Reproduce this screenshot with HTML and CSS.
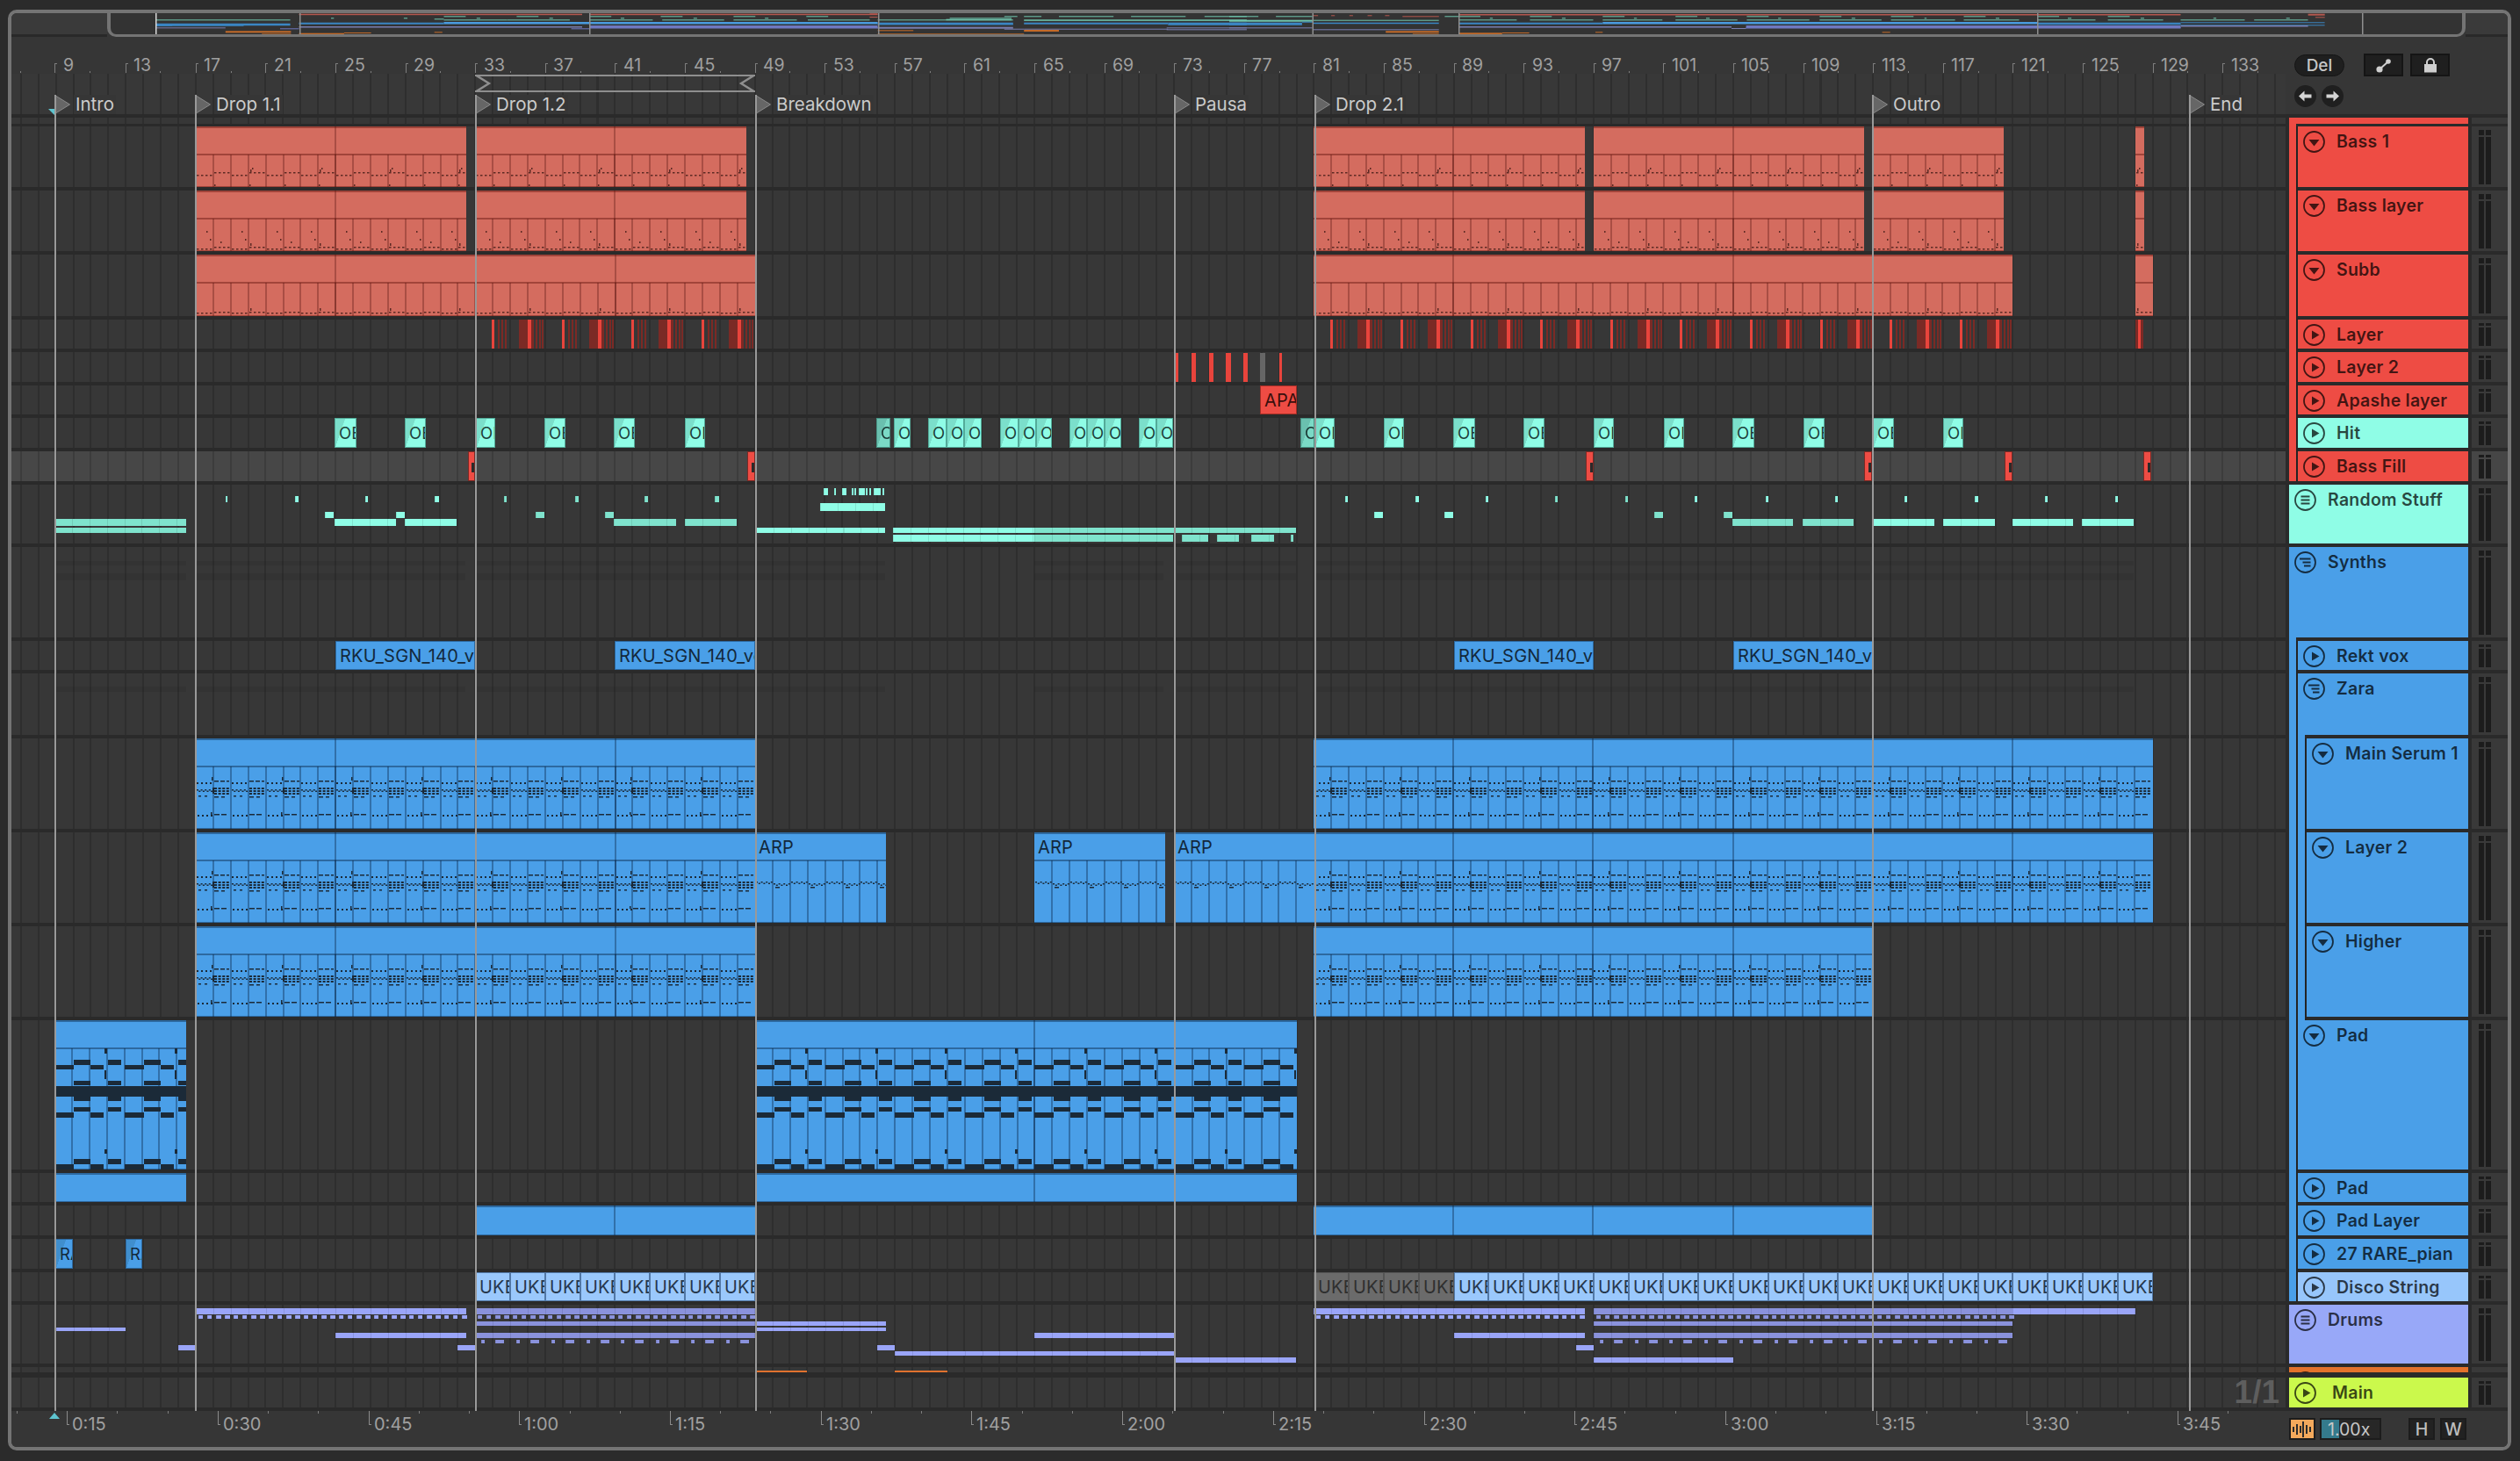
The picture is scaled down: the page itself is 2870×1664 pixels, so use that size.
FILE: index.html
```html
<!DOCTYPE html>
<html lang="en">
<head>
<meta charset="utf-8">
<title>Arrangement View</title>
<link rel="stylesheet" href="styles.css">
</head>
<body>
<svg class="defs" width="0" height="0" aria-hidden="true">
  <symbol id="i-play" viewBox="0 0 25 25"><circle cx="12.5" cy="12.5" r="11.5" fill="none" stroke="currentColor" stroke-width="1.8"/><path d="M10 7.5l8.5 5-8.5 5z" fill="currentColor"/></symbol>
  <symbol id="i-down" viewBox="0 0 25 25"><circle cx="12.5" cy="12.5" r="11.5" fill="none" stroke="currentColor" stroke-width="1.8"/><path d="M6.5 10h12l-6 7.5z" fill="currentColor"/></symbol>
  <symbol id="i-list" viewBox="0 0 25 25"><circle cx="12.5" cy="12.5" r="11.5" fill="none" stroke="currentColor" stroke-width="1.8"/><path d="M7.5 8.5h10M7.5 12.5h10M7.5 16.5h10" fill="none" stroke="currentColor" stroke-width="1.8"/></symbol>
  <symbol id="i-tree" viewBox="0 0 25 25"><circle cx="12.5" cy="12.5" r="11.5" fill="none" stroke="currentColor" stroke-width="1.8"/><path d="M6 8.5h12.5M9.5 12.5h9M11 16.5h7.5" fill="none" stroke="currentColor" stroke-width="1.8"/></symbol>
</svg>
<div class="frame">
  <div class="overview">
    <div class="ov-side ov-left"></div>
    <div class="ov-box" id="ov"></div>
    <div class="ov-side ov-right"></div>
  </div>

  <div class="top">
    <div class="ruler-area">
      <div class="ruler" id="ruler"></div>
      <div class="markers" id="markers">
        <div class="loop" id="loop">
          <svg class="loop-ends" preserveAspectRatio="none" viewBox="0 0 320 20"><path d="M0 0l16 10L0 20M320 0l-16 10 16 10" fill="none" stroke="#8f8f8f" stroke-width="2.4"/></svg>
        </div>
        <div class="playhead-top"></div>
      </div>
    </div>
    <div class="controls">
      <div class="ctl-row">
        <div class="pill">Del</div>
        <div class="sq-btn"><svg width="20" height="20" viewBox="0 0 20 20"><circle cx="5" cy="15" r="3.6" fill="#cfcfcf"/><circle cx="15" cy="6" r="2.8" fill="#cfcfcf"/><path d="M5 15L15 6" stroke="#cfcfcf" stroke-width="2"/></svg></div>
        <div class="sq-btn"><svg width="20" height="20" viewBox="0 0 20 20"><path d="M6 9V7a4 4 0 018 0v2" fill="none" stroke="#cfcfcf" stroke-width="2"/><rect x="3" y="9" width="14" height="9.5" fill="#cfcfcf"/></svg></div>
      </div>
      <div class="ctl-row second">
        <div class="arrow"><svg width="25" height="25" viewBox="0 0 25 25"><path d="M5 12.5l6.5-6v4h8v4h-8v4z" fill="#d4d4d4"/></svg></div>
        <div class="arrow"><svg width="25" height="25" viewBox="0 0 25 25"><path d="M20 12.5l-6.5-6v4h-8v4h8v4z" fill="#d4d4d4"/></svg></div>
      </div>
    </div>
  </div>

  <div class="tracks">
    <div class="row h10"><div class="lane"></div><div class="head g-red"><div class="name open"></div></div><div class="meter-col"><div class="meter"><i></i><i></i></div></div></div>

    <div class="row h73"><div class="lane" data-lane="bass1"></div><div class="head g-red"><div class="in"><div class="name"><svg class="ico"><use href="#i-down"/></svg><span>Bass 1</span></div></div></div><div class="meter-col"><div class="meter"><i></i><i></i></div></div></div>
    <div class="row h73"><div class="lane" data-lane="bass2"></div><div class="head g-red"><div class="in"><div class="name"><svg class="ico"><use href="#i-down"/></svg><span>Bass layer</span></div></div></div><div class="meter-col"><div class="meter"><i></i><i></i></div></div></div>
    <div class="row h74"><div class="lane" data-lane="subb"></div><div class="head g-red"><div class="in"><div class="name"><svg class="ico"><use href="#i-down"/></svg><span>Subb</span></div></div></div><div class="meter-col"><div class="meter"><i></i><i></i></div></div></div>
    <div class="row h37"><div class="lane" data-lane="layer"></div><div class="head g-red"><div class="in"><div class="name"><svg class="ico"><use href="#i-play"/></svg><span>Layer</span></div></div></div><div class="meter-col"><div class="meter"><i></i><i></i></div></div></div>
    <div class="row h38"><div class="lane" data-lane="layer2"></div><div class="head g-red"><div class="in"><div class="name"><svg class="ico"><use href="#i-play"/></svg><span>Layer 2</span></div></div></div><div class="meter-col"><div class="meter"><i></i><i></i></div></div></div>
    <div class="row h37"><div class="lane" data-lane="apashe"></div><div class="head g-red"><div class="in"><div class="name"><svg class="ico"><use href="#i-play"/></svg><span>Apashe layer</span></div></div></div><div class="meter-col"><div class="meter"><i></i><i></i></div></div></div>
    <div class="row h38"><div class="lane" data-lane="hit"></div><div class="head g-red"><div class="in"><div class="name n-cyan"><svg class="ico"><use href="#i-play"/></svg><span>Hit</span></div></div></div><div class="meter-col"><div class="meter"><i></i><i></i></div></div></div>
    <div class="row h38 lit"><div class="lane" data-lane="fill"></div><div class="head g-red end"><div class="in"><div class="name last"><svg class="ico"><use href="#i-play"/></svg><span>Bass Fill</span></div></div></div><div class="meter-col"><div class="meter"><i></i><i></i></div></div></div>

    <div class="row h71"><div class="lane" data-lane="random"></div><div class="head"><div class="name n-cyan l0"><svg class="ico"><use href="#i-list"/></svg><span>Random Stuff</span></div></div><div class="meter-col"><div class="meter"><i></i><i></i></div></div></div>
    <div class="row h107"><div class="lane" data-lane="synths"></div><div class="head g-blue"><div class="name open l0"><svg class="ico"><use href="#i-tree"/></svg><span>Synths</span></div></div><div class="meter-col"><div class="meter"><i></i><i></i></div></div></div>
    <div class="row h37"><div class="lane" data-lane="rekt"></div><div class="head g-blue"><div class="in"><div class="name"><svg class="ico"><use href="#i-play"/></svg><span>Rekt vox</span></div></div></div><div class="meter-col"><div class="meter"><i></i><i></i></div></div></div>
    <div class="row h74"><div class="lane" data-lane="zara"></div><div class="head g-blue"><div class="in"><div class="name open"><svg class="ico"><use href="#i-tree"/></svg><span>Zara</span></div></div></div><div class="meter-col"><div class="meter"><i></i><i></i></div></div></div>
    <div class="row h107"><div class="lane" data-lane="serum"></div><div class="head g-blue"><div class="in sub"><div class="in"><div class="name"><svg class="ico"><use href="#i-down"/></svg><span>Main Serum 1</span></div></div></div></div><div class="meter-col"><div class="meter"><i></i><i></i></div></div></div>
    <div class="row h107"><div class="lane" data-lane="arp"></div><div class="head g-blue"><div class="in sub"><div class="in"><div class="name"><svg class="ico"><use href="#i-down"/></svg><span>Layer 2</span></div></div></div></div><div class="meter-col"><div class="meter"><i></i><i></i></div></div></div>
    <div class="row h107"><div class="lane" data-lane="higher"></div><div class="head g-blue"><div class="in sub"><div class="in"><div class="name"><svg class="ico"><use href="#i-down"/></svg><span>Higher</span></div></div></div></div><div class="meter-col"><div class="meter"><i></i><i></i></div></div></div>
    <div class="row h174"><div class="lane" data-lane="pad"></div><div class="head g-blue"><div class="in"><div class="name"><svg class="ico"><use href="#i-down"/></svg><span>Pad</span></div></div></div><div class="meter-col"><div class="meter"><i></i><i></i></div></div></div>
    <div class="row h37"><div class="lane" data-lane="pad2"></div><div class="head g-blue"><div class="in"><div class="name"><svg class="ico"><use href="#i-play"/></svg><span>Pad</span></div></div></div><div class="meter-col"><div class="meter"><i></i><i></i></div></div></div>
    <div class="row h38"><div class="lane" data-lane="padlayer"></div><div class="head g-blue"><div class="in"><div class="name"><svg class="ico"><use href="#i-play"/></svg><span>Pad Layer</span></div></div></div><div class="meter-col"><div class="meter"><i></i><i></i></div></div></div>
    <div class="row h38"><div class="lane" data-lane="rare"></div><div class="head g-blue"><div class="in"><div class="name"><svg class="ico"><use href="#i-play"/></svg><span>27 RARE_pian</span></div></div></div><div class="meter-col"><div class="meter"><i></i><i></i></div></div></div>
    <div class="row h37"><div class="lane" data-lane="disco"></div><div class="head g-blue end"><div class="in"><div class="name n-sky last"><svg class="ico"><use href="#i-play"/></svg><span>Disco String</span></div></div></div><div class="meter-col"><div class="meter"><i></i><i></i></div></div></div>

    <div class="row h71"><div class="lane" data-lane="drums"></div><div class="head"><div class="name n-purple l0"><svg class="ico"><use href="#i-list"/></svg><span>Drums</span></div></div><div class="meter-col"><div class="meter"><i></i><i></i></div></div></div>
    <div class="row h12"><div class="lane" data-lane="orange"></div><div class="head"><div class="name n-orange l0"><svg class="ico"><use href="#i-list"/></svg></div></div><div class="meter-col"><div class="meter"><i></i><i></i></div></div></div>
    <div class="row h38"><div class="lane" data-lane="main"><div class="sig">1/1</div></div><div class="head"><div class="name n-lime l0 wide"><svg class="ico"><use href="#i-play"/></svg><span>Main</span></div></div><div class="meter-col"><div class="meter"><i></i><i></i></div></div></div>
  </div>

  <div class="footer">
    <div class="timeline" id="timeline"><div class="playhead-bottom"></div></div>
    <div class="foot-ctl">
      <div class="wave-btn"><svg width="24" height="20" viewBox="0 0 24 20"><path d="M2 7v6M6 4v12M10 6v8M13 1v18M17 5v10M21 7v6" stroke="#2b2b2b" stroke-width="2"/></svg></div>
      <div class="zoomval">1.00x</div>
      <div class="key k-h">H</div>
      <div class="key">W</div>
    </div>
  </div>
</div>
<script src="app.js"></script>
</body>
</html>
```

FILE: styles.css
```css
* { box-sizing: border-box; }
html, body { margin: 0; height: 100%; }
body {
  width: 2870px;
  height: 1664px;
  background: #2b2b2b;
  font-family: Inter, "Liberation Sans", sans-serif;
  overflow: hidden;
}
.defs { position: absolute; }

.frame {
  margin: 11px 0 0 9px;
  width: 2851px;
  height: 1641px;
  border: 4px solid #747474;
  border-radius: 10px;
  background: #363636;
  display: flex;
  flex-direction: column;
  overflow: hidden;
}

/* overview strip */
.overview { height: 27px; display: flex; flex: none; }
.ov-side { background: #3a3a3a; border-bottom: 3px solid #292929; }
.ov-left { width: 109px; }
.ov-right { width: 48px; }
.ov-box {
  flex: 1;
  position: relative;
  background: #333;
  border: solid #747474;
  border-width: 0 4px 3px 4px;
  border-radius: 0 0 10px 10px;
  overflow: hidden;
}
.ov-box svg { display: block; width: 100%; height: 100%; }

/* top: ruler and locators */
.top {
  height: 92px;
  flex: none;
  display: flex;
  background: #2a2a2a;
  padding-bottom: 4px;
  position: relative;
  z-index: 5;
}
.ruler-area { width: 2590px; display: flex; flex-direction: column; }
.ruler { height: 42px; position: relative; background: #363636; }
.bar-tick {
  position: absolute;
  top: 30px;
  width: 3px;
  height: 11px;
  border-left: 1px solid #7d7d7d;
  border-top: 1px solid #7d7d7d;
}
.bar-dot { position: absolute; top: 39px; width: 1px; height: 2px; background: #7d7d7d; }
.bar-num {
  position: absolute;
  top: 22px;
  line-height: 20px;
  font-size: 19.5px;
  color: #a0a0a0;
  white-space: nowrap;
}
.markers {
  height: 46px;
  position: relative;
  background: repeating-linear-gradient(90deg, #2e2e2e 9.8px, #2e2e2e 11.8px, #383838 11.8px, #383838 29.7px);
}
.marker { position: absolute; top: 24px; height: 22px; }
.marker-flag { display: block; width: 18px; height: 22px; }
.marker-line {
  position: absolute;
  left: 0;
  top: 0;
  width: 2px;
  height: 1499px;
  background: #999;
}
.marker-label {
  position: absolute;
  left: 22px;
  top: 0;
  height: 22px;
  line-height: 22px;
  padding: 0 2px;
  font-size: 20.5px;
  color: #cbcbcb;
  background: #363636;
  white-space: nowrap;
}
.loop {
  position: absolute;
  top: 1px;
  height: 20px;
  border: solid #8f8f8f;
  border-width: 2px 0;
}
.loop-ends { position: absolute; left: 0; top: -2px; width: 100%; height: 20px; }
.playhead-top {
  position: absolute;
  left: 42px;
  top: 40px;
  width: 0;
  height: 0;
  border-top: 7px solid #5ec4cf;
  border-left: 7px solid transparent;
}
.controls { flex: 1; background: #363636; padding: 19px 0 0 10px; }
.ctl-row { display: flex; align-items: center; height: 26px; }
.ctl-row.second { margin-top: 9px; gap: 6px; }
.pill {
  width: 57px;
  height: 25px;
  border-radius: 13px;
  background: #1f1f1f;
  border: 1px solid #151515;
  color: #c6c6c6;
  font-size: 19px;
  font-weight: 500;
  line-height: 23px;
  text-align: center;
  margin-right: 22px;
}
.sq-btn {
  width: 45px;
  height: 26px;
  margin-right: 8px;
  background: #1f1f1f;
  border: 2px solid #151515;
  display: flex;
  align-items: center;
  justify-content: center;
}
.arrow { width: 25px; height: 25px; border-radius: 50%; background: #1f1f1f; }
.arrow svg { display: block; }

/* tracks */
.tracks { flex: none; }
.row { display: flex; background: #2a2a2a; overflow: hidden; --seg: 3px; --gap: 4px; }
.h10 { height: 10px; --gap: 3px; }
.h12 { height: 12px; --gap: 6px; }
.h37 { height: 37px; }
.h38 { height: 38px; }
.h71 { height: 71px; --seg: 6px; }
.h73 { height: 73px; --seg: 6px; }
.h74 { height: 74px; --seg: 6px; }
.h107 { height: 107px; --seg: 6px; }
.h174 { height: 174px; --seg: 6px; }

.lane {
  --bg: #373737;
  --ln: #2e2e2e;
  width: 2590px;
  flex: none;
  margin-bottom: var(--gap);
  position: relative;
  background: repeating-linear-gradient(90deg, var(--ln) 9.8px, var(--ln) 11.8px, var(--bg) 11.8px, var(--bg) 29.7px);
  overflow: hidden;
}
.lit .lane { --bg: #474747; --ln: #3c3c3c; }
.lit .meter-col { background: #464646; }

.head {
  width: 204px;
  flex: none;
  margin-left: 4px;
  background: var(--g, transparent);
  display: flex;
  overflow: hidden;
}
.head.end { margin-bottom: var(--gap); }
.g-red { --g: #ee4c44; }
.g-blue { --g: #4a9fe8; }
.in {
  flex: 1;
  min-width: 0;
  margin-left: 8px;
  border-left: 2px solid #232323;
  background: #2a2a2a;
  display: flex;
  flex-direction: column;
}
.in.sub { background: var(--g); }
.name {
  flex: 1;
  min-height: 0;
  margin-bottom: var(--gap);
  padding: 5px 0 0 6px;
  background-color: var(--n, var(--g));
  color: rgba(0, 0, 0, 0.72);
  display: flex;
  align-items: flex-start;
  gap: 13px;
  font-size: 19.5px;
  letter-spacing: 0.25px;
  font-weight: 600;
  line-height: 25px;
  white-space: nowrap;
  overflow: hidden;
}
.name.last { margin-bottom: 0; }
.name.open {
  margin-bottom: 0;
  background-image: linear-gradient(#2a2a2a, #2a2a2a);
  background-repeat: no-repeat;
  background-size: calc(100% - 8px) var(--gap);
  background-position: 8px 100%;
}
.name.wide { gap: 18px; }
.n-cyan { --n: #8ffde6; }
.n-sky { --n: #97c6fb; }
.n-purple { --n: #98a8f8; }
.n-orange { --n: #e3712b; }
.n-lime { --n: #cbf94c; }
.ico { width: 25px; height: 25px; flex: none; }

.meter-col {
  width: 41px;
  flex: none;
  margin-left: 4px;
  margin-bottom: var(--gap);
  background: #393939;
  padding: 4px 0 0 8px;
  overflow: hidden;
}
.meter { display: flex; gap: 2px; height: calc(100% - 3px); }
.meter i {
  display: block;
  width: 6px;
  height: 100%;
  background: linear-gradient(#1c1c1c 0 var(--seg), transparent var(--seg) calc(var(--seg) + 2px), #1c1c1c calc(var(--seg) + 2px));
}

.sig {
  position: absolute;
  right: 7px;
  top: 0;
  font-family: "Liberation Sans", sans-serif;
  line-height: 34px;
  font-size: 37px;
  font-weight: 700;
  color: #5e5e5e;
}

/* clips */
.clip {
  position: absolute;
  top: 0;
  bottom: 0;
  overflow: hidden;
  background: var(--c);
  color: var(--t);
  font-size: 20px;
  letter-spacing: 0.2px;
  white-space: nowrap;
}
.clip svg { position: absolute; left: 0; top: 0; }
.c-red { --c: #d46c5f; --t: #3a1512; --nt: #5d2a24; --ln: rgba(70, 10, 5, 0.3); --edge: rgba(90, 15, 8, 0.42); }
.c-blue { --c: #4a9fe8; --t: #13283b; --nt: #1b2a38; --ln: rgba(5, 30, 60, 0.36); --edge: rgba(5, 30, 60, 0.42); }
.c-hot { --c: #ee4c44; --t: #3a0f0c; --edge: rgba(90, 15, 8, 0.5); }
.c-cyan { --c: #8ffde6; --t: #1d3f3a; --edge: rgba(10, 70, 60, 0.45); }
.c-sky { --c: #9ac8fc; --t: #26374d; --edge: rgba(10, 40, 80, 0.5); }
.c-off { --c: #6b6b6b; --t: #2f2f2f; --edge: rgba(0, 0, 0, 0.2); }
.clip .edge { fill: var(--edge); }
.clip .bl { stroke: var(--ln); stroke-width: 2; fill: none; }
.clip .ll { stroke: var(--ln); stroke-width: 2; fill: none; }
.clip .nt { fill: var(--nt); }
.clip-name {
  position: absolute;
  left: 4px;
  top: 2px;
  line-height: 30px;
}
.clip.solid { border: 1px solid var(--edge); }
.clip.solid .clip-name { top: 0; left: 4px; bottom: 0; display: flex; align-items: center; line-height: 1; }
.clip.wedge {
  background-image: linear-gradient(to bottom right, rgba(0, 40, 40, 0.14) 50%, transparent 50.5%);
  background-size: 11px 100%;
  background-repeat: no-repeat;
  font-size: 18.5px;
}
.clip.dim { filter: brightness(0.86); }

.nt-box { position: absolute; }
.layer-fill { background: #7b2a25; }
.layer-hot { background: #e8443c; }
.layer-thin { background: #7b2a25; }
.layer-grey { background: #666; }
.fill-clip { position: absolute; top: 0; bottom: 0; background: #ee4c44; border: 1px solid #7a2a25; }
.fill-clip::after {
  content: "";
  position: absolute;
  right: 0;
  top: 12px;
  width: 3px;
  height: 11px;
  background: #2a2a2a;
}
.n-t { background-color: #8ffde6; }
.n-td { background-color: #7fe3cd; }
.n-p { background-color: #9aa5f8; }
.n-pd { background-color: #8a92dc; }
.n-o { background-color: #e0722e; }
.bars { background-image: repeating-linear-gradient(90deg, rgba(0, 0, 0, 0.1) 0 1px, transparent 1px 19.9px); }
.ghost { background: rgba(0, 0, 0, 0.055); }

/* footer */
.footer { flex: 1; display: flex; background: #363636; }
.timeline { width: 2590px; position: relative; }
.t-tick { position: absolute; top: 0; width: 1px; height: 3px; background: #7d7d7d; }
.t-major {
  position: absolute;
  top: 0;
  width: 3px;
  height: 16px;
  border-left: 1px solid #8a8a8a;
  border-bottom: 1px solid #8a8a8a;
}
.t-label {
  position: absolute;
  top: 5px;
  line-height: 20px;
  font-size: 20px;
  color: #a0a0a0;
  white-space: nowrap;
}
.playhead-bottom {
  position: absolute;
  left: 43px;
  top: 2px;
  width: 0;
  height: 0;
  border-left: 6.5px solid transparent;
  border-right: 6.5px solid transparent;
  border-bottom: 7.5px solid #5ec4cf;
}
.foot-ctl { flex: 1; display: flex; padding: 8px 0 0 4px; align-items: flex-start; }
.wave-btn {
  width: 30px;
  height: 25px;
  background: #f3a95c;
  border: 2px solid #1c1c1c;
  display: flex;
  align-items: center;
  justify-content: center;
}
.zoomval {
  width: 70px;
  height: 25px;
  margin-left: 5px;
  padding-left: 7px;
  background: linear-gradient(90deg, #347a8c 0 20px, #272727 20px);
  border: 2px solid #1c1c1c;
  color: #c8c8c8;
  font-size: 19.5px;
  line-height: 22px;
}
.key {
  width: 30px;
  height: 25px;
  margin-left: 6px;
  background: #222;
  border: 2px solid #1c1c1c;
  color: #bdbdbd;
  font-size: 19.5px;
  font-weight: 500;
  line-height: 22px;
  text-align: center;
}
.k-h { margin-left: 31px; }
```

FILE: app.js
```js
(function () {
  var ORIGIN = 13;
  var X = function (b) { return 222.8 + (b - 17) * 19.9; };
  var lanes = {};
  document.querySelectorAll('[data-lane]').forEach(function (e) { lanes[e.dataset.lane] = e; });

  function box(parent, cls, x1, x2, top, h, text) {
    var d = document.createElement('div');
    d.className = cls;
    var l = Math.round(x1), r = Math.round(x2);
    d.style.left = (l - ORIGIN) + 'px';
    d.style.width = Math.max(1, r - l) + 'px';
    if (top !== null && top !== undefined) { d.style.top = top + 'px'; d.style.height = h + 'px'; }
    if (text) d.textContent = text;
    parent.appendChild(d);
    return d;
  }
  function r(x, y, w, h) { return 'M' + x.toFixed(1) + ' ' + y + 'h' + w + 'v' + h + 'h' + (-w) + 'z'; }

  /* ---- note patterns, one per clip family ---- */
  function blueNotes(start, end) {
    var d = '';
    for (var a = Math.floor(start); a < end; a++) {
      var x = Math.round(X(a) - X(start)), i;
      if ((a - 17) % 2 === 0) {
        for (i = 0; i < 4; i++) { d += r(x + 1 + 5 * i, 50, 2, 2); d += r(x + 2 + 5 * i, 87, 2, 2); }
        for (i = 0; i < 8; i++) d += r(x + 1 + i * 2.3, 58 + (i % 2) * 1.5, 2, 1.5);
        d += r(x + 3, 65, 3, 1.5) + r(x + 10, 65, 3, 1.5);
      } else {
        d += r(x + 1, 48, 5, 1.5) + r(x + 8, 48, 5, 1.5) + r(x + 15, 48, 3, 1.5);
        for (i = 0; i < 4; i++) { d += r(x + 1 + i * 4.6, 56, 3, 2) + r(x + 1 + i * 4.6, 59, 3, 2) + r(x + 1 + i * 4.6, 62, 3, 2); }
        d += r(x + 1, 66, 5, 1.5) + r(x + 9, 66, 4, 1.5);
        d += r(x + 1, 86, 6, 1.5) + r(x + 9, 86, 6, 1.5);
        if ((a - 18) % 4 === 0) d += r(x - 2, 44, 1.5, 4) + r(x - 3, 84, 1.5, 3) + r(x - 1, 56, 2, 7);
      }
    }
    return d;
  }
  function arpNotes(start, end) {
    var d = '';
    for (var a = Math.floor(start); a < end; a++) {
      var x = Math.round(X(a) - X(start)), i;
      for (i = 0; i < 7; i++) d += r(x + 1 + i * 2.8, (a % 2 ? 56 : 58) + (i % 2) * 1.5, 2, 1.5);
      if (a % 2 === 0) d += r(x + 3, 62, 5, 1.5);
    }
    return d;
  }
  function bassNotes(start, end) {
    var d = '';
    for (var a = Math.floor(start); a < end; a++) {
      var x = Math.round(X(a) - X(start)), i;
      var y = (a - 17) % 2 === 0 ? 55 : 52;
      for (i = 0; i < 4; i++) d += r(x + 1 + 5 * i, y, 2.5, 1.5);
      if ((a - 17) % 4 === 3) d += r(x + 2, 49, 1.5, 3) + r(x + 4, 47, 1.5, 2);
      if ((a - 17) % 2 === 1) d += r(x + 1, 66, 1.5, 2);
    }
    return d;
  }
  function bass2Notes(start, end) {
    var d = '';
    for (var a = Math.floor(start); a < end; a++) {
      var x = Math.round(X(a) - X(start)), i;
      var y = (a - 17) % 2 === 0 ? 66 : 64;
      for (i = 0; i < 4; i++) d += r(x + 1 + 5 * i, y, 2.5, 1.5);
      if ((a - 17) % 2 === 0) d += r(x + 12, 46, 1.5, 2) + r(x + 16, 55, 1.5, 2);
      if ((a - 17) % 4 === 1) d += r(x + 8, 58, 1.5, 2);
      if ((a - 17) % 4 === 3) d += r(x + 2, 60, 1.5, 3);
    }
    return d;
  }
  function subbNotes(start, end) {
    var d = '';
    for (var a = Math.floor(start); a < end; a++) {
      var x = Math.round(X(a) - X(start)), i;
      var y = (a - 17) % 2 === 0 ? 66 : 65;
      for (i = 0; i < 4; i++) d += r(x + 1 + 5 * i, y, 2.5, 1.5);
      if ((a - 17) % 4 === 3) d += r(x + 2, 61, 1.5, 3);
    }
    return d;
  }
  /* the pad chords repeat every four bars */
  function padNotes(width) {
    var d = '';
    var high = [[45, 6], [69, 5], [87, 5], [99, 5], [158, 6]];
    var low = [[51, 5], [105, 6], [164, 6]];
    for (var x = 0; x < width; x += 79.6) {
      low.forEach(function (s) { d += r(x, s[0], 22, s[1]) + r(x + 41, s[0], 15, s[1]); });
      high.forEach(function (s) { d += r(x + 22, s[0], 19, s[1]) + r(x + 61, s[0], 15, s[1]); });
      d += r(x + 57, 32, 3, 6) + r(x + 57, 57, 2, 10) + r(x + 57, 147, 3, 5);
    }
    d += r(0, 74.5, width, 12);
    return d;
  }

  /* ---- clip with title bar, bar lines and notes ---- */
  function clip(lane, color, b1, b2, o) {
    o = o || {};
    var parent = lanes[lane];
    var el = box(parent, 'clip ' + color, X(b1), X(b2));
    if (o.px) { el.style.left = (o.px[0] - ORIGIN) + 'px'; el.style.width = (o.px[1] - o.px[0]) + 'px'; }
    var w = o.px ? o.px[1] - o.px[0] : Math.round(X(b2)) - Math.round(X(b1));
    var h = parent.clientHeight;
    var tb = 31, bl = '', ll = '';
    var x0 = X(b1);
    var a;
    if (!o.flat) {
      for (a = Math.ceil(b1 + 0.01); a < b2; a++) {
        bl += 'M' + Math.round(X(a) - x0) + ' ' + (tb + 1) + 'V' + h;
      }
    }
    (o.loops || []).forEach(function (l) {
      if (l > b1 && l < b2) ll += 'M' + Math.round(X(l) - x0) + ' 0V' + h;
    });
    var html = '<svg width="' + w + '" height="' + h + '" shape-rendering="crispEdges">';
    if (bl) html += '<path class="bl" d="' + bl + '"/>';
    if (ll) html += '<path class="ll" d="' + ll + '"/>';
    html += '<path class="edge" d="' + r(0, 0, w, 1.5) + r(0, h - 1.5, w, 1.5) + (o.flat ? '' : r(0, tb, w, 2)) + '"/>';
    if (o.notes) html += '<path class="nt" shape-rendering="auto" d="' + o.notes(b1, b2) + '"/>';
    if (o.padded) html += '<path class="nt" d="' + padNotes(w) + '"/>';
    html += '</svg>';
    el.insertAdjacentHTML('beforeend', html);
    if (o.title) {
      var t = document.createElement('div');
      t.className = 'clip-name';
      t.textContent = o.title;
      el.appendChild(t);
    }
    return el;
  }
  function solid(lane, color, x1, x2, text, extra) {
    var el = box(lanes[lane], 'clip solid ' + color + (extra ? ' ' + extra : ''), x1, x2);
    var t = document.createElement('div');
    t.className = 'clip-name';
    t.textContent = text;
    el.appendChild(t);
    return el;
  }

  /* ---- bass ---- */
  var loopBars = [25, 41, 57, 65, 89, 105, 121];
  [[17, 32.5], [33, 48.5], [81, 96.5], [97, 112.5], [113, 120.5], [128, 128.5]].forEach(function (c) {
    clip('bass1', 'c-red', c[0], c[1], { loops: loopBars, notes: bassNotes });
    clip('bass2', 'c-red', c[0], c[1], { loops: loopBars, notes: bass2Notes });
  });
  [[17, 49], [81, 121], [128, 129]].forEach(function (c) {
    clip('subb', 'c-red', c[0], c[1], { loops: loopBars, notes: subbNotes });
  });

  /* ---- layer stripes ---- */
  function layerCycle(x) {
    var L = lanes.layer;
    box(L, 'nt-box layer-hot', x + 19, x + 22, 0, 33);
    [26, 30, 34].forEach(function (o) { box(L, 'nt-box layer-thin', x + o, x + o + 2, 0, 33); });
    box(L, 'nt-box layer-fill', x + 50, x + 67, 0, 33);
    box(L, 'nt-box layer-hot', x + 60, x + 64, 0, 33);
    [69, 73, 76].forEach(function (o) { box(L, 'nt-box layer-thin', x + o, x + o + 2, 0, 33); });
  }
  var b;
  for (b = 33; b < 49; b += 4) layerCycle(X(b));
  for (b = 81; b < 121; b += 4) layerCycle(X(b));
  box(lanes.layer, 'nt-box layer-fill', X(128), X(128) + 9, 0, 33);
  box(lanes.layer, 'nt-box layer-hot', X(128) + 3, X(128) + 6, 0, 33);

  [[1337.5, 1342], [1357, 1362], [1376.5, 1382], [1396, 1402], [1416, 1421]].forEach(function (p) {
    box(lanes.layer2, 'nt-box layer-hot', p[0], p[1], 1, 33);
  });
  box(lanes.layer2, 'nt-box layer-grey', 1435, 1441, 1, 33);
  box(lanes.layer2, 'nt-box layer-hot', 1457, 1460, 1, 33);

  solid('apashe', 'c-hot', 1435.4, 1476.8, 'APASHE');

  /* ---- hit ---- */
  [[381, 406], [461, 485], [542, 564], [620, 644], [699, 723], [780, 803],
   [997.5, 1013.6, 1], [1017.6, 1036.8], [1057.3, 1077.9], [1077.9, 1098], [1098, 1118],
   [1138.6, 1159.5], [1159.5, 1179.7], [1179.7, 1197.5], [1217.6, 1238], [1238, 1258], [1258, 1276.5],
   [1296.6, 1317], [1317, 1336], [1480.5, 1497, 1], [1497, 1520],
   [1576, 1599], [1655, 1680], [1734.6, 1759], [1815, 1838], [1894.5, 1917.5], [1973, 1998], [2053.6, 2078], [2133, 2157], [2213, 2236]
  ].forEach(function (c) {
    solid('hit', 'c-cyan', c[0], c[1], 'OB', 'wedge' + (c[2] ? ' dim' : ''));
  });

  /* ---- bass fill ---- */
  [[532.5, 541], [851, 860], [1806, 1815], [2122.5, 2132], [2283, 2292], [2441, 2450]].forEach(function (c) {
    box(lanes.fill, 'fill-clip', c[0], c[1]);
  });

  /* ---- random stuff ---- */
  function cy(x1, x2, top, h, dim) { box(lanes.random, 'nt-box bars ' + (dim ? 'n-td' : 'n-t'), x1, x2, top - 552, h); }
  cy(62, 212, 591, 8, 1); cy(62, 212, 601, 6, 1);
  [[257, 259], [336, 340], [416, 419], [495, 500], [574, 577, 1], [655, 659, 1], [734, 738, 1], [814, 819, 1],
   [1532, 1535], [1612, 1616], [1692, 1695], [1771, 1774, 1], [1851, 1854, 1], [1930, 1933], [2011, 2014], [2090, 2093], [2169, 2172], [2249, 2253], [2329, 2332], [2409, 2412]
  ].forEach(function (c) { cy(c[0], c[1], 565, 7, c[2]); });
  [[370, 380], [451, 461], [610, 620, 1], [689, 699, 1], [1565, 1575], [1645, 1655], [1884, 1894, 1], [1963, 1973, 1]].forEach(function (c) { cy(c[0], c[1], 583, 6.5, c[2]); });
  [[381, 451], [461, 520], [699, 770, 1], [780, 839, 1], [1973, 2042, 1], [2053, 2111, 1], [2133, 2203], [2213, 2272], [2292, 2361], [2371, 2430]].forEach(function (c) { cy(c[0], c[1], 591, 8, c[2]); });
  cy(861, 1008, 601, 6);
  cy(1017, 1178, 601, 6); cy(1178, 1476, 601, 6, 1);
  cy(1017, 1178, 609, 8); cy(1178, 1336, 609, 8, 1);
  [[1346, 1376], [1386, 1411], [1425, 1451], [1470, 1473]].forEach(function (c) { cy(c[0], c[1], 609, 8, 1); });
  [[938, 943], [950, 952], [959, 964], [970, 972], [973, 975], [978, 985], [986, 988], [990, 992], [995, 1003], [1005, 1007]].forEach(function (c) { cy(c[0], c[1], 556, 8); });
  cy(934, 1008, 573, 9);

  /* ---- ghost lines in the collapsed group rows ---- */
  [[62, 212], [222, 530], [541, 860], [860, 1008], [1178, 1325], [1340, 1476], [1497, 2130], [2133, 2430]].forEach(function (c) {
    box(lanes.synths, 'nt-box ghost', c[0], c[1], 16, 5);
    box(lanes.synths, 'nt-box ghost', c[0], c[1], 30, 8);
    box(lanes.zara, 'nt-box ghost', c[0], c[1], 15, 6);
  });

  /* ---- synths ---- */
  [[25, 33], [41, 49], [89, 97], [105, 113]].forEach(function (c) {
    solid('rekt', 'c-blue', X(c[0]), X(c[1]), 'RKU_SGN_140_vox');
  });
  var blueLoops = [25, 41, 89, 97, 105, 113, 121];
  clip('serum', 'c-blue', 17, 49, { loops: blueLoops, notes: blueNotes });
  clip('serum', 'c-blue', 81, 129, { loops: blueLoops, notes: blueNotes });
  clip('arp', 'c-blue', 17, 49, { loops: blueLoops, notes: blueNotes });
  clip('arp', 'c-blue', 49, 56.5, { title: 'ARP', notes: arpNotes });
  clip('arp', 'c-blue', 65, 72.5, { title: 'ARP', notes: arpNotes });
  clip('arp', 'c-blue', 73, 81, { title: 'ARP', notes: arpNotes });
  clip('arp', 'c-blue', 81, 129, { loops: blueLoops, notes: blueNotes });
  clip('higher', 'c-blue', 17, 49, { loops: blueLoops, notes: blueNotes });
  clip('higher', 'c-blue', 81, 113, { loops: blueLoops, notes: blueNotes });

  clip('pad', 'c-blue', 9, 16.5, { px: [62, 212], padded: true });
  clip('pad', 'c-blue', 49, 80, { px: [860, 1477], loops: [65], padded: true });
  clip('pad2', 'c-blue', 9, 16.5, { px: [62, 212], flat: true });
  clip('pad2', 'c-blue', 49, 80, { px: [860, 1477], loops: [65], flat: true });
  clip('padlayer', 'c-blue', 33, 49, { loops: [41], flat: true });
  clip('padlayer', 'c-blue', 81, 113, { loops: [89, 97, 105], flat: true });

  solid('rare', 'c-blue', 62.5, 83, 'RARE', 'wedge');
  solid('rare', 'c-blue', 143, 162, 'RARE', 'wedge');

  var u;
  for (u = 33; u < 49; u += 2) solid('disco', 'c-sky', X(u), X(u + 2), 'UKE');
  for (u = 81; u < 89; u += 2) solid('disco', 'c-off', X(u), X(u + 2), 'UKE');
  for (u = 89; u < 129; u += 2) solid('disco', 'c-sky', X(u), X(u + 2), 'UKE');

  /* ---- drums ---- */
  function dr(x1, x2, top, h, dim) { box(lanes.drums, 'nt-box bars ' + (dim ? 'n-pd' : 'n-p'), x1, x2, top, h); }
  function drB(b1, b2, top, h, dim) { dr(X(b1), X(b2), top, h, dim); }
  function dotted(b1, b2, dim) {
    var p, x2 = X(b2), i = 0;
    for (p = X(b1) + 3; p < x2 - 3; p += 10) {
      var wd = (i % 4 < 2) ? 5 : 6;
      dr(p, p + wd, 12, 4, dim);
      i++;
    }
  }
  function sparse(b1, b2, dim) {
    var p, x2 = X(b2);
    for (p = X(b1); p < x2 - 5; p += 39.8) {
      dr(p + 7, p + 11, 40, 4, dim);
      dr(p + 23, p + 33, 40, 4, dim);
    }
  }
  drB(17, 32.5, 4, 6.5); dotted(17, 32.5);
  drB(33, 49, 4, 6.5, 1); dotted(33, 49, 1); drB(33, 49, 19, 5, 1); drB(33, 49, 32, 6, 1); sparse(33, 49, 1);
  drB(9, 13, 26, 4);
  drB(25, 32.5, 32, 6); drB(16, 17, 46, 6); drB(32, 33, 46, 6);
  drB(49, 56.5, 19, 5); drB(49, 56.5, 26, 4);
  drB(65, 73, 32, 6); drB(56, 57, 46, 6); drB(57, 73, 53, 5); drB(73, 80, 60, 6);
  drB(81, 96.5, 4, 6.5); dotted(81, 96.5); drB(89, 96.5, 32, 6); drB(96, 97, 46, 6);
  drB(97, 121, 4, 6.5, 1); dotted(97, 121, 1); drB(97, 121, 19, 5, 1); drB(97, 121, 32, 6, 1); sparse(97, 121, 1);
  drB(121, 128, 4, 6.5); drB(97, 105, 60, 6);
  box(lanes.orange, 'nt-box n-o', X(49), X(52), 4, 1.5);
  box(lanes.orange, 'nt-box n-o', X(57), X(60), 4, 1.5);

  /* ---- bar ruler and locators ---- */
  var ruler = document.getElementById('ruler');
  function rulerAt(cls, x, text) {
    var d = document.createElement('div');
    d.className = cls;
    d.style.left = Math.round(x - ORIGIN) + 'px';
    if (text) d.textContent = text;
    return d;
  }
  var n;
  for (n = 9; n <= 133; n += 4) {
    var tx = n === 9 ? 62 : n === 13 ? 142.5 : X(n);
    ruler.appendChild(rulerAt('bar-tick', tx));
    ruler.appendChild(rulerAt('bar-num', tx + 9.5, String(n)));
    ruler.appendChild(rulerAt('bar-dot', tx + 39.8));
  }
  ruler.appendChild(rulerAt('bar-dot', 23));

  var markers = document.getElementById('markers');
  [['Intro', 62], ['Drop 1.1', 222], ['Drop 1.2', 541], ['Breakdown', 860], ['Pausa', 1337], ['Drop 2.1', 1497], ['Outro', 2132], ['End', 2493]].forEach(function (m) {
    var d = rulerAt('marker', m[1]);
    d.insertAdjacentHTML('beforeend',
      '<svg class="marker-flag" viewBox="0 0 18 22"><path d="M.5 .5L17.5 11 .5 21.5z" fill="#666" stroke="#8a8a8a" stroke-width="1"/></svg>' +
      '<div class="marker-line"></div><div class="marker-label">' + m[0] + '</div>');
    markers.appendChild(d);
  });
  var loop = document.getElementById('loop');
  loop.style.left = (541 - ORIGIN) + 'px';
  loop.style.width = '319px';

  /* ---- time ruler ---- */
  var tl = document.getElementById('timeline');
  var labels = ['0:15', '0:30', '0:45', '1:00', '1:15', '1:30', '1:45', '2:00', '2:15', '2:30', '2:45', '3:00', '3:15', '3:30', '3:45'];
  labels.forEach(function (t, i) {
    var x = 76.3 + i * 171.7;
    tl.appendChild(rulerAt('t-major', x));
    tl.appendChild(rulerAt('t-label', x + 6, t));
  });
  var k;
  for (k = 0; k < 45; k++) {
    if (k % 3 === 1) continue;
    var tick = 19 + k * 57.23;
    if (tick < 2590) tl.appendChild(rulerAt('t-tick', tick));
  }

  /* ---- overview strip ---- */
  var C = { R: '#b5574e', T: '#6fc6ae', B: '#3a86c4', H: '#4a9be0', P: '#6f78c0', D: '#7a7fb0', O: '#c46a28' };
  var Z9 = [
    [69,254,37,1,'T'],[69,254,50,2.5,'B'],[69,190,53,2,'B'],[70,92,56,1,'B'],[70,165,64,1,'D'],[165,255,76,2,'O'],[215,255,85,1.5,'O'],[240,266,67,1,'P'],
    [266,655,17,1.5,'R'],[665,1061,17,1.5,'R'],
    [310,314,31,1,'T'],[410,415,31,1,'T'],[510,515,31,1,'T'],[610,615,31,1,'T'],[465,495,25,1,'T'],[565,595,25,1,'T'],[452,465,34,1,'T'],[465,552,37,1,'T'],[552,638,37,1,'T'],
    [266,465,47,2,'B'],[465,1061,45,2.5,'H'],[266,655,60,1.5,'D'],[640,665,67,1,'P'],[665,1061,57,3,'P'],[665,1061,63,1.5,'P'],
    [266,328,83,1.5,'O'],[328,365,81,1,'O'],[452,463,79,1,'O'],
    [708,713,31,1,'T'],[808,813,31,1,'T'],[906,911,31,1,'T'],[665,695,25,1,'T'],[763,793,25,1,'T'],[863,893,25,1,'T'],[963,993,25,1,'T'],[665,752,37,1,'T'],[765,850,37,1,'T'],[863,950,37,1,'T'],[965,1050,37,1,'T'],[1050,1061,16,1,'R'],[1050,1061,27,1,'R'],
    [1155,1245,35,1.5,'T'],[1061,1247,37,1,'T'],[1235,1253,25,1,'T'],[1160,1245,31,1,'T'],[1061,1247,47,2.5,'B'],[1061,1247,52,1,'B'],[1061,1247,62,2,'D'],[1235,1262,68,1,'D'],[1061,1110,73,1,'O'],[1061,1262,85,1.5,'O'],
    [1262,1286,25,1,'T'],[1310,1385,25,1,'T'],[1409,1484,25,1,'T'],[1510,1568,25,1,'T'],[1262,1568,37,1.5,'T'],[1262,1460,47,2,'B'],[1460,1568,47,3,'B'],[1262,1460,68,1,'D'],[1458,1568,64,1,'D'],[1458,1568,70,1,'D'],[1262,1310,72,2,'O']
  ];
  var Z10 = [
    [0,40,25,1,'T'],[64,114,25,1,'T'],[0,115,38,2,'T'],[115,288,38,1,'T'],[296,315,25,1,'T'],[115,122,22,1,'R'],[140,145,22,1,'R'],[165,170,22,1,'R'],[190,196,22,1,'R'],[214,220,22,1,'R'],[238,288,25,1,'R'],
    [0,100,47,3,'B'],[100,115,44,1,'B'],[115,288,47,1.5,'B'],[0,114,64,1,'D'],[115,288,70,1,'D'],[215,288,76,2,'O'],[252,288,85,1.5,'O'],
    [315,1110,18,1.5,'R'],[358,362,31,1,'T'],[457,462,31,1,'T'],[556,560,31,1,'T'],[655,660,31,1,'T'],[754,758,31,1,'T'],[855,860,31,1,'T'],[955,958,31,1,'T'],[1053,1058,31,1,'T'],
    [315,345,25,1,'T'],[413,443,25,1,'T'],[513,543,25,1,'T'],[613,643,25,1,'T'],[711,741,25,1,'T'],[811,841,25,1,'T'],[909,940,25,1,'T'],[1009,1039,25,1,'T'],
    [315,395,37,1,'T'],[413,500,37,1,'T'],[513,595,37,1,'T'],[613,698,37,1,'T'],[711,797,37,1,'T'],[811,896,37,1,'T'],[909,997,37,1,'T'],[1009,1085,37,1,'T'],
    [315,513,47,2,'B'],[513,1110,45,2.5,'H'],[315,690,60,1.5,'D'],[690,710,66,1,'D'],[710,1110,57,3,'P'],[710,1110,63,1.5,'P'],[315,375,82,2,'O'],[375,412,81,1,'O'],[503,513,79,1,'O'],[897,908,79,1,'O'],
    [1110,1190,37,1,'T'],[1207,1283,37,1,'T'],[1152,1157,31,1,'T'],[1252,1257,31,1,'T'],[1110,1140,25,1,'T'],[1207,1237,25,1,'T'],[1110,1307,18,1.5,'R'],[1110,1307,47,2,'B'],[1110,1307,52,1,'B'],[1110,1307,57,3,'P'],[1110,1307,63,1.5,'P'],
    [1307,1395,37,1,'T'],[1408,1482,37,1,'T'],[1352,1356,31,1,'T'],[1452,1457,31,1,'T'],[1307,1505,46,1,'B'],[1307,1505,55,1,'B'],[1307,1482,57,1.5,'D'],[1482,1505,17,2,'R'],[1492,1505,28,1,'R']
  ];
  var ox = 126, oy = 15, s = '';
  function ovRect(x1, x2, zy, h, c) {
    s += '<rect x="' + (x1 - ox).toFixed(1) + '" y="' + (10 + zy / 3 - oy).toFixed(1) + '" width="' + (x2 - x1).toFixed(1) + '" height="' + h + '" fill="' + C[c] + '"/>';
  }
  Z9.forEach(function (z) { ovRect(120 + z[0] * 0.829, 120 + z[1] * 0.829, z[2], z[3], z[4]); });
  Z10.forEach(function (z) { ovRect(1400 + z[0] * 0.829, 1400 + z[1] * 0.829, z[2], z[3], z[4]); });
  [[177, '#d8d8d8'], [341, '#8f8f8f'], [671, '#8f8f8f'], [1000, '#8f8f8f'], [1494.5, '#8f8f8f'], [1661, '#8f8f8f'], [2320, '#8f8f8f'], [2690, '#8f8f8f']].forEach(function (l) {
    s += '<rect x="' + (l[0] - ox) + '" y="0" width="1.5" height="24" fill="' + l[1] + '"/>';
  });
  document.getElementById('ov').insertAdjacentHTML('beforeend', '<svg viewBox="0 0 2678 24" preserveAspectRatio="none">' + s + '</svg>');
})();
```
